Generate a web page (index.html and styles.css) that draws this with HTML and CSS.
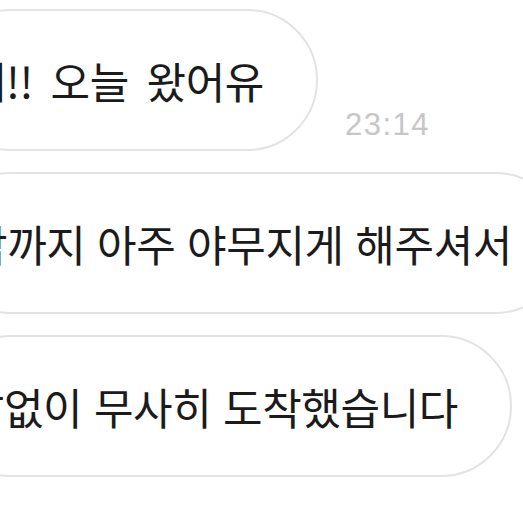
FILE: index.html
```html
<!DOCTYPE html>
<html lang="ko">
<head>
    <meta charset="UTF-8" />
    <meta name="viewport" content="width=device-width, initial-scale=1.0" />
    <title>채팅</title>
    <link rel="stylesheet" href="styles.css">
</head>
<body>
    <div class="chat">
        <div class="row">
            <div class="bubble bubble-first">
                <span class="text">네!! 오늘 왔어유</span>
            </div>
            <span class="time">23:14</span>
        </div>
        <div class="row">
            <div class="bubble bubble-second">
                <span class="text">마지막까지 아주 야무지게 해주셔서</span>
            </div>
        </div>
        <div class="row">
            <div class="bubble bubble-third">
                <span class="text">덕분에 탈없이 무사히 도착했습니다</span>
            </div>
        </div>
    </div>
</body>
</html>
```

FILE: styles.css
```css
body {
    margin: 0;
    background-color: #fff;
    font-family: "Noto Sans CJK KR", "Noto Sans", sans-serif;
    overflow: hidden;
}

.chat {
    display: flex;
    flex-direction: column;
    gap: 21px;
    padding-top: 9px;
}

.row {
    display: flex;
    align-items: flex-end;
    gap: 27px;
}

/* 말풍선 왼쪽은 화면 밖으로 잘림 */
.bubble {
    flex: none;
    display: flex;
    justify-content: flex-end;
    align-items: center;
    box-sizing: border-box;
    height: 142px;
    margin-left: -60px;
    padding-right: 52px;
    border: 2px solid #e3e3e3;
    border-radius: 71px;
    background-color: #fff;
    white-space: nowrap;
}

.bubble-first {
    width: 378px;
}

.bubble-second {
    width: 626px;
}

.bubble-third {
    width: 572px;
}

.text {
    font-size: 43px;
    letter-spacing: -0.4px;
    color: #1b1b1b;
}

.bubble-first .text {
    word-spacing: 6px;
}

.time {
    margin-bottom: 8px;
    font-family: "Liberation Sans", Arial, sans-serif;
    font-size: 31px;
    letter-spacing: 1.5px;
    color: #c6c6c6;
}
```
